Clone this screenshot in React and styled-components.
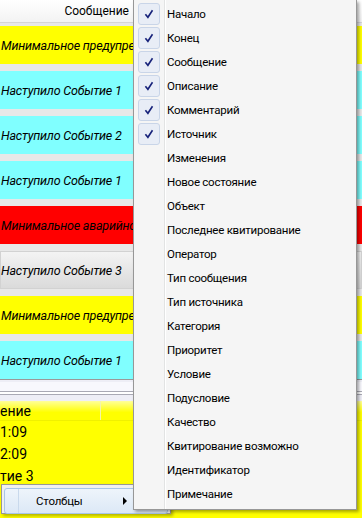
import React from 'react'
import styled, { createGlobalStyle } from 'styled-components'

const GlobalStyle = createGlobalStyle`
  html, body {
    margin: 0;
    padding: 0;
    background: #fff;
    overflow: hidden;
  }
  body {
    font-family: Roboto, 'Noto Sans', sans-serif;
    color: #000;
  }
`

const YELLOW = '#ffff00'
const CYAN = '#80ffff'
const RED = '#ff0000'

const Screen = styled.div`
  position: relative;
  width: 362px;
  height: 518px;
  overflow: hidden;
  display: flex;
  flex-direction: column;
  background: #fff;
`

// Upper events grid
const EventGrid = styled.div`
  display: flex;
  flex-direction: column;
  background: #e8e8e8;
`

const GridHeader = styled.div`
  height: 22px;
  display: flex;
  align-items: center;
  background: linear-gradient(#ffffff, #f3f3f3);
  border-bottom: 1px solid #d5d5d5;
  font-size: 12px;
`

const HeaderCell = styled.div`
  flex: none;
  width: ${p => p.$w}px;
  box-sizing: border-box;
  padding: 0 5px;
  text-align: ${p => p.$align || 'left'};
  white-space: nowrap;
  overflow: hidden;
`

const GridBody = styled.div`
  display: flex;
  flex-direction: column;
  gap: 7px;
  padding-top: 3px;
`

const EventRow = styled.div`
  height: 38px;
  display: flex;
  align-items: center;
  background: ${p => p.$bg};
  ${p => p.$plain && `
    background: linear-gradient(#f4f4f4, #dadada);
    box-shadow: inset 0 0 0 1px #d2d2d2;
  `}
  font-size: 12.5px;
  font-style: italic;
  letter-spacing: -0.2px;
`

const EventCell = styled.div`
  flex: none;
  width: ${p => p.$w}px;
  box-sizing: border-box;
  padding-left: 1px;
  white-space: nowrap;
  overflow: hidden;
`

// Splitter between grids
const Splitter = styled.div`
  height: 21px;
  display: flex;
  flex-direction: column;
  background: #eeeef6;
  border-top: 1px solid #9a9a9a;
`

const SplitterBand = styled.div`
  height: 9px;
  margin-top: 2px;
  background: #f8f8fd;
  border-bottom: 1px solid #a9a9b4;
  box-shadow: 0 2px 0 #fff, 0 3px 0 #a9a9b4;
`

// Lower details grid
const DetailGrid = styled.div`
  flex: 1;
  background: ${YELLOW};
  font-size: 14px;
`

const DetailHeader = styled.div`
  height: 19px;
  display: flex;
  align-items: center;
  background: linear-gradient(#ffff9a, #ffff00 60%);
  border-bottom: 1px solid #f0f000;
`

const DetailHeaderCell = styled.div`
  flex: none;
  width: ${p => p.$w}px;
  height: 100%;
  display: flex;
  align-items: center;
  border-right: 1px solid #f4f4a8;
`

const DetailRow = styled.div`
  height: 22px;
  display: flex;
  align-items: center;
`

// Context menus
const ParentMenu = styled.div`
  position: absolute;
  left: 1px;
  top: 484px;
  width: 170px;
  height: 30px;
  box-sizing: border-box;
  padding: 3px 2px;
  background: #f0f0f0;
  border: 1px solid #979797;
  box-shadow: 2px 2px 3px rgba(0, 0, 0, 0.3);
`

const MenuHighlight = styled.div`
  position: relative;
  height: 24px;
  display: flex;
  align-items: center;
  padding-left: 31px;
  border: 1px solid #a8c6e8;
  border-radius: 3px;
  background: linear-gradient(#eef4fb, #dce8f6);
  font-size: 11.5px;
  letter-spacing: -0.2px;

  &::before {
    content: '';
    position: absolute;
    left: 13px;
    top: 0;
    bottom: 0;
    width: 1px;
    background: #c9d9ec;
  }
`

const SubArrow = styled.span`
  position: absolute;
  left: 118px;
  top: 8px;
  width: 0;
  height: 0;
  border-top: 4px solid transparent;
  border-bottom: 4px solid transparent;
  border-left: 4px solid #000;
`

const ColumnMenu = styled.div`
  position: absolute;
  left: 133px;
  top: 0;
  width: 224px;
  height: 510px;
  box-sizing: border-box;
  padding: 2px;
  background: #f5f5f5;
  border: 1px solid #979797;
  border-top: none;
  box-shadow: 2px 2px 3px rgba(0, 0, 0, 0.35);
  display: flex;
  flex-direction: column;

  &::before {
    content: '';
    position: absolute;
    left: 30px;
    top: 0;
    bottom: 0;
    width: 1px;
    background: #e2e3e3;
    box-shadow: 1px 0 0 #fff;
  }
`

const MenuItem = styled.div`
  height: 24px;
  flex: none;
  display: flex;
  align-items: center;
  font-size: 11.5px;
  letter-spacing: -0.25px;
  white-space: nowrap;
`

const CheckSlot = styled.div`
  flex: none;
  width: 22px;
  height: 22px;
  margin: 0 7px 0 2px;
  box-sizing: border-box;
  display: flex;
  align-items: center;
  justify-content: center;
  border-radius: 3px;
  ${p => p.$on && `
    border: 1px solid #c9d5e8;
    background: #e8edf6;
  `}
`

const CheckMark = () => (
  <svg width="12" height="12" viewBox="0 0 12 12">
    <path d="M2.4 6.3 L4.9 9.3 L9.5 2.2" fill="none" stroke="#17227a" strokeWidth="1.6" />
  </svg>
)

const events = [
  { text: 'Минимальное предупреждение', bg: YELLOW },
  { text: 'Наступило Событие 1', bg: CYAN },
  { text: 'Наступило Событие 2', bg: CYAN },
  { text: 'Наступило Событие 1', bg: CYAN },
  { text: 'Минимальное аварийное', bg: RED },
  { text: 'Наступило Событие 3', plain: true },
  { text: 'Минимальное предупреждение', bg: YELLOW },
  { text: 'Наступило Событие 1', bg: CYAN },
]

const columns = [
  { name: 'Начало', on: true },
  { name: 'Конец', on: true },
  { name: 'Сообщение', on: true },
  { name: 'Описание', on: true },
  { name: 'Комментарий', on: true },
  { name: 'Источник', on: true },
  { name: 'Изменения' },
  { name: 'Новое состояние' },
  { name: 'Объект' },
  { name: 'Последнее квитирование' },
  { name: 'Оператор' },
  { name: 'Тип сообщения' },
  { name: 'Тип источника' },
  { name: 'Категория' },
  { name: 'Приоритет' },
  { name: 'Условие' },
  { name: 'Подусловие' },
  { name: 'Качество' },
  { name: 'Квитирование возможно' },
  { name: 'Идентификатор' },
  { name: 'Примечание' },
]

const details = ['1:09', '2:09', 'тие 3']

export default function App() {
  return (
    <Screen>
      <GlobalStyle />

      <EventGrid>
        <GridHeader>
          <HeaderCell $w={134} $align="right">Сообщение</HeaderCell>
        </GridHeader>
        <GridBody>
          {events.map((ev, i) => (
            <EventRow key={i} $bg={ev.bg} $plain={ev.plain}>
              <EventCell $w={134}>{ev.text}</EventCell>
            </EventRow>
          ))}
        </GridBody>
      </EventGrid>

      <Splitter>
        <SplitterBand />
      </Splitter>

      <DetailGrid>
        <DetailHeader>
          <DetailHeaderCell $w={100}>ение</DetailHeaderCell>
        </DetailHeader>
        {details.map((d, i) => (
          <DetailRow key={i}>{d}</DetailRow>
        ))}
      </DetailGrid>

      <ParentMenu>
        <MenuHighlight>
          Столбцы
          <SubArrow />
        </MenuHighlight>
      </ParentMenu>

      <ColumnMenu>
        {columns.map(col => (
          <MenuItem key={col.name}>
            <CheckSlot $on={col.on}>{col.on && <CheckMark />}</CheckSlot>
            {col.name}
          </MenuItem>
        ))}
      </ColumnMenu>
    </Screen>
  )
}
